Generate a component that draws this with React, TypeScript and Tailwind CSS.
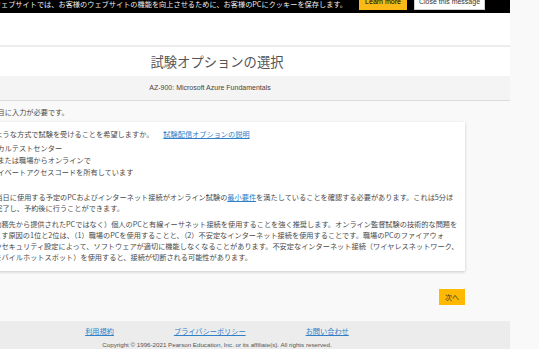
export default function App() {
  return (
    <div className="w-[539px] h-[349px] overflow-hidden bg-[#f9f9f9] flex font-['Noto_Sans_CJK_JP','Liberation_Sans',sans-serif] text-[#4a4a4a]">
      <div className="w-[586px] shrink-0 -ml-[76px] flex flex-col">
        {/* cookie banner */}
        <div className="h-[13px] shrink-0 bg-black flex items-end justify-end pr-[25px]">
          <p className="mb-[4px] text-[7.2px] leading-[10px] text-[#eee] whitespace-nowrap mr-[12px]">
            このウェブサイトでは、お客様のウェブサイトの機能を向上させるために、お客様のPCにクッキーを保存します。
          </p>
          <button className="mb-[3px] w-[48px] h-[20px] shrink-0 bg-[#fbb917] text-[7px] text-black flex items-end justify-center pb-[3px] font-['Liberation_Sans',sans-serif]">
            Learn more
          </button>
          <button className="mb-[3px] ml-[7px] w-[71px] h-[20px] shrink-0 bg-white border border-[#cfcfcf] text-[7px] text-[#333] flex items-end justify-center pb-[2px] font-['Liberation_Sans',sans-serif]">
            Close this message
          </button>
        </div>

        <div className="h-[32px] shrink-0 bg-white" />
        <div className="h-[2px] shrink-0 bg-[#ececec]" />

        {/* title */}
        <div className="h-[29px] shrink-0 bg-white flex items-center justify-center">
          <h1 className="text-[13.3px] leading-none text-[#555] mt-[1px]">試験オプションの選択</h1>
        </div>
        <div className="h-[25px] shrink-0 bg-[#f4f4f4] border-b border-[#dcdcdc] flex items-center justify-center pr-[14px]">
          <p className="text-[7px] text-[#444] font-['Liberation_Sans',sans-serif]">AZ-900: Microsoft Azure Fundamentals</p>
        </div>

        {/* body */}
        <div className="px-[45px] pt-[6px] pb-[16px] flex flex-col">
          <p className="ml-[7px] text-[7.2px] leading-[11px] whitespace-nowrap">＊の項目に入力が必要です。</p>

          <div className="mt-[4px] bg-white shadow-[0_1px_3px_rgba(0,0,0,0.2)] pl-[12px] pr-[8px] pt-[7px] pb-[8px] text-[7.2px] leading-[11px] whitespace-nowrap">
            <p>
              どのような方式で試験を受けることを希望しますか。
              <a className="ml-[10px] text-[#2f7fc9] underline">試験配信オプションの説明</a>
            </p>
            <div className="mt-[2px] -ml-[5px] flex flex-col">
              {['ローカルテストセンター', '自宅または職場からオンラインで', 'プライベートアクセスコードを所有しています'].map((label) => (
                <label key={label} className="h-[12px] flex items-center gap-[2px]">
                  <span className="w-[5px] h-[5px] rounded-full border border-[#888]" />
                  {label}
                </label>
              ))}
            </div>

            <p className="mt-[14px]">
              試験当日に使用する予定のPCおよびインターネット接続がオンライン試験の
              <a className="text-[#2f7fc9] underline">最小要件</a>
              を満たしていることを確認する必要があります。これは5分ほ
              <br />
              どで完了し、予約後に行うことができます。
            </p>

            <p className="mt-[5px] ml-[6px]">
              （勤務先から提供されたPCではなく）個人のPCと有線イーサネット接続を使用することを強く推奨します。オンライン監督試験の技術的な問題を
              <br />
              起こす原因の1位と2位は、（1）職場のPCを使用することと、（2）不安定なインターネット接続を使用することです。職場のPCのファイアウォ
              <br />
              ルやセキュリティ設定によって、ソフトウェアが適切に機能しなくなることがあります。不安定なインターネット接続（ワイヤレスネットワーク、
              <br />
              （モバイルホットスポット）を使用すると、接続が切断される可能性があります。
            </p>
          </div>

          <div className="mt-[18px] flex justify-end">
            <button className="w-[26px] h-[16px] bg-[#ffb900] text-[7px] text-[#333]">次へ</button>
          </div>
        </div>

        {/* footer */}
        <footer className="bg-[#ececec] pt-[5px] pb-[10px] flex flex-col items-center">
          <div className="flex gap-[60px] text-[7.2px] leading-[11px]">
            <a className="text-[#2f7fc9] underline">利用規約</a>
            <a className="text-[#2f7fc9] underline">プライバシーポリシー</a>
            <a className="text-[#2f7fc9] underline">お問い合わせ</a>
          </div>
          <p className="mt-[3px] text-[6.2px] leading-[10px] text-[#555] font-['Liberation_Sans',sans-serif]">
            Copyright © 1996-2021 Pearson Education, Inc. or its affiliate(s). All rights reserved.
          </p>
        </footer>
      </div>
    </div>
  );
}
